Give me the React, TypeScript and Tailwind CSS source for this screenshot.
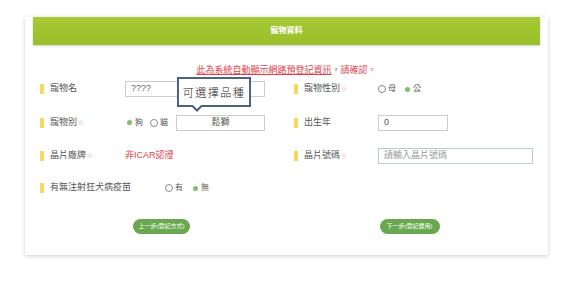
import React from 'react';

const font = { fontFamily: '"Liberation Sans", "Noto Sans CJK TC", sans-serif' };

const Label: React.FC<{ text: string; req?: boolean }> = ({ text, req }) => (
  <div className="flex items-center gap-[6px]">
    <span className="w-[4px] h-[10px] bg-[#f6d860]"></span>
    <span className="text-[9px] text-[#555]">
      {text}
      {req && <span className="text-[#f0b4b4] text-[6px] ml-[1px]">※</span>}
    </span>
  </div>
);

const Radio: React.FC<{ label: string; checked?: boolean }> = ({ label, checked }) => (
  <span className="flex items-center gap-[2px] text-[8px] text-[#555]">
    {checked ? (
      <span className="w-[8px] h-[8px] rounded-full flex items-center justify-center">
        <span className="w-[5px] h-[5px] rounded-full bg-[#7dbf6a]"></span>
      </span>
    ) : (
      <span className="w-[8px] h-[8px] rounded-full border border-[#888]"></span>
    )}
    {label}
  </span>
);

const App: React.FC = () => {
  return (
    <div className="w-[570px] h-[283px] bg-white pt-[17px]" style={font}>
      <div className="ml-[25px] w-[523px] h-[238px] bg-white shadow-[0_1px_4px_rgba(0,0,0,0.2)] px-[8px]">
        <div className="h-[28px] bg-gradient-to-b from-[#a6c935] to-[#98bf2a] shadow-[0_1px_2px_rgba(0,0,0,0.2)] flex items-center justify-center">
          <span className="text-white text-[8px] font-bold">寵物資料</span>
        </div>

        <div className="mt-[21px] text-center text-[9px] text-[#e0424a] leading-none">
          <span className="underline decoration-[#e0424a]">此為系統自動顯示網路預登記資訊</span>，請確認。
        </div>

        <div className="grid grid-cols-[254px_1fr] pl-[7px] mt-[3px]">
          {/* row 1 */}
          <div className="flex items-center h-[22px] relative">
            <div className="w-[85px]"><Label text="寵物名" /></div>
            <div className="w-[140px] h-[16px] border border-[#ccc] text-[9px] text-[#666] pl-[5px] flex items-center">????</div>
            <div className="absolute left-[137px] top-[-1px] w-[74px] h-[30px] bg-white border-2 border-[#4d6285] flex items-center justify-center z-10">
              <span className="text-[11px] text-[#222] tracking-[1.5px] whitespace-nowrap font-light" style={{ fontFamily: '"Noto Sans CJK TC", serif' }}>可選擇品種</span>
              <span className="absolute left-[12px] bottom-[-7px] w-0 h-0 border-l-[6px] border-r-[6px] border-t-[6px] border-l-transparent border-r-transparent border-t-[#4d6285]"></span>
              <span className="absolute left-[14px] bottom-[-4px] w-0 h-0 border-l-[4px] border-r-[4px] border-t-[4px] border-l-transparent border-r-transparent border-t-white"></span>
            </div>
          </div>
          <div className="flex items-center h-[22px]">
            <div className="w-[84px]"><Label text="寵物性別" req /></div>
            <div className="flex items-center gap-[7px]">
              <Radio label="母" />
              <Radio label="公" checked />
            </div>
          </div>

          {/* row 2 */}
          <div className="flex items-center h-[33px] mt-[6px]">
            <div className="w-[85px]"><Label text="寵物別" req /></div>
            <div className="flex items-center gap-[7px] w-[51px]">
              <Radio label="狗" checked />
              <Radio label="貓" />
            </div>
            <div className="w-[89px] h-[16px] border border-[#ccc] text-[9px] text-[#555] flex items-center justify-center">鬆獅</div>
          </div>
          <div className="flex items-center h-[33px] mt-[6px]">
            <div className="w-[84px]"><Label text="出生年" /></div>
            <div className="w-[70px] h-[16px] border border-[#ccc] text-[9px] text-[#555] pl-[5px] flex items-center">0</div>
          </div>

          {/* row 3 */}
          <div className="flex items-center h-[33px]">
            <div className="w-[85px]"><Label text="晶片廠牌" req /></div>
            <span className="text-[9px] text-[#e0424a]">非ICAR認證</span>
          </div>
          <div className="flex items-center h-[33px]">
            <div className="w-[84px]"><Label text="晶片號碼" req /></div>
            <div className="w-[155px] h-[16px] border border-[#b7cfc9] text-[9px] text-[#999] pl-[5px] flex items-center">請輸入晶片號碼</div>
          </div>

          {/* row 4 */}
          <div className="flex items-center h-[32px]">
            <div className="w-[125px]"><Label text="有無注射狂犬病疫苗" /></div>
            <div className="flex items-center gap-[8px]">
              <Radio label="有" />
              <Radio label="無" checked />
            </div>
          </div>
          <div></div>
        </div>

        <div className="grid grid-cols-2 mt-[15px]">
          <div className="flex pl-[100px]">
            <button className="w-[57px] h-[15px] rounded-full bg-[#6aa84f] text-white text-[6px] flex items-center justify-center">上一步(登記方式)</button>
          </div>
          <div className="flex pl-[93px]">
            <button className="w-[60px] h-[15px] rounded-full bg-[#6aa84f] text-white text-[6px] flex items-center justify-center">下一步(登記費用)</button>
          </div>
        </div>
      </div>
    </div>
  );
};

export default App;
